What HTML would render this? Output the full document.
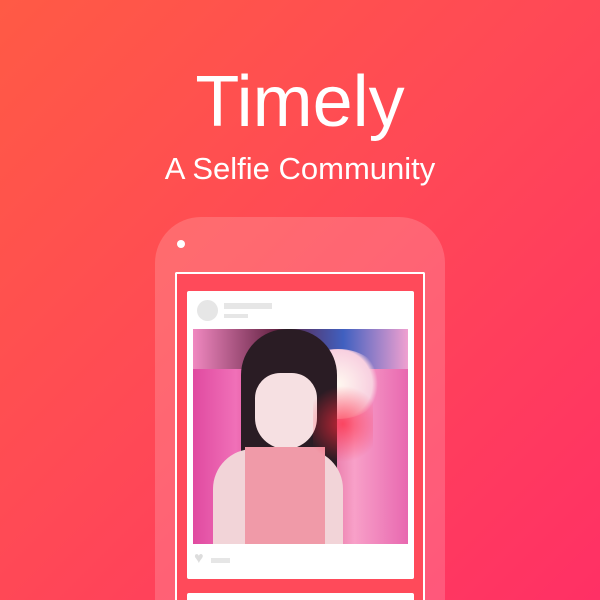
<!DOCTYPE html>
<html style="width:600px;height:600px;overflow:hidden"><head><style>
*{margin:0;padding:0}
body{width:600px;height:600px;overflow:hidden;position:relative;font-family:"Liberation Sans",sans-serif;background:linear-gradient(135deg,#ff5a45 0%,#ff4a55 45%,#ff3065 100%)}
.t{position:absolute;left:0;width:600px;text-align:center;color:#fff}
.phone{position:absolute;left:155px;top:217px;width:290px;height:383px;border-radius:46px 46px 0 0;background:rgba(255,255,255,0.17)}
.dot{position:absolute;left:177px;top:240px;width:8px;height:8px;border-radius:50%;background:#fff}
.screen{position:absolute;left:175px;top:272px;width:246px;height:328px;border:2px solid #fff;border-bottom:0;border-radius:2px 2px 0 0;background:#ff4a5a}
.card{position:absolute;left:187px;top:291px;width:227px;height:288px;background:#fff;border-radius:2px}
.card2{position:absolute;left:187px;top:593px;width:227px;height:7px;background:#fff;border-radius:2px 2px 0 0}
.photo{position:absolute;left:193px;top:329px;width:215px;height:215px;overflow:hidden;background:linear-gradient(90deg,#e04aa0 0%,#f070b8 20%,#c8306a 45%,#f8a0c8 75%,#e868b0 100%)}
</style></head><body>
<div class="t" style="top:60px;font-size:72px;line-height:84px">Timely</div>
<div class="t" style="top:150px;font-size:31px;line-height:38px">A Selfie Community</div>
<div class="phone"></div>
<div class="dot"></div>
<div class="screen"></div>
<div class="card">
 <div style="position:absolute;left:10px;top:9px;width:21px;height:21px;border-radius:50%;background:#e6e6e6"></div>
 <div style="position:absolute;left:37px;top:12px;width:48px;height:6px;background:#e6e6e6"></div>
 <div style="position:absolute;left:37px;top:23px;width:24px;height:4px;background:#e6e6e6"></div>
 <div style="position:absolute;left:7px;top:261px;font-size:16px;color:#ddd;line-height:14px">♥</div>
 <div style="position:absolute;left:24px;top:267px;width:19px;height:5px;background:#e6e6e6"></div>
</div>
<div class="photo">
 <div style="position:absolute;left:0;top:0;width:215px;height:40px;background:linear-gradient(90deg,#f088c0,#602040 40%,#4060c0 70%,#f0a0d0)"></div>
 <div style="position:absolute;left:100px;top:20px;width:90px;height:70px;border-radius:50%;background:radial-gradient(circle,#fff8f0 0%,#f8d0e0 60%,transparent 70%)"></div>
 <div style="position:absolute;left:48px;top:0;width:96px;height:150px;border-radius:46px 46px 10px 10px;background:#2a1c24"></div>
 <div style="position:absolute;left:62px;top:44px;width:62px;height:76px;border-radius:26px 26px 32px 32px;background:#f6e0e2"></div>
 <div style="position:absolute;left:20px;top:120px;width:130px;height:100px;border-radius:40px 40px 0 0;background:#f2d4d8"></div>
 <div style="position:absolute;left:52px;top:118px;width:80px;height:100px;background:#f09aa8"></div>
 <div style="position:absolute;left:120px;top:50px;width:60px;height:90px;background:radial-gradient(circle,rgba(255,40,60,.7),transparent 70%)"></div>
</div>
<div class="card2"></div>
</body></html>
